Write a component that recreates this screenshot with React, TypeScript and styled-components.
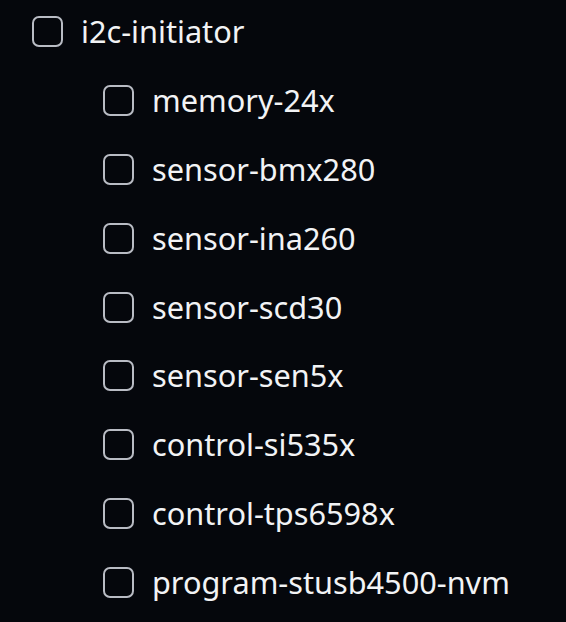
import React from 'react';
import styled, { createGlobalStyle } from 'styled-components';

const GlobalStyle = createGlobalStyle`
  html, body {
    margin: 0;
    padding: 0;
    background: #05070c;
  }
  body {
    font-family: "Noto Sans", "Open Sans", sans-serif;
    color: #f2f3f5;
  }
`;

const Tree = styled.ul`
  list-style: none;
  margin: 0;
  padding: 16px 0 0 32px;
  display: flex;
  flex-direction: column;
`;

const Children = styled.ul`
  list-style: none;
  margin: 0;
  padding: 0 0 0 71px;
  display: flex;
  flex-direction: column;
`;

const Row = styled.label`
  display: flex;
  align-items: center;
  gap: 18px;
  height: 31px;
  margin-bottom: 37.9px;
  cursor: pointer;
`;

const Box = styled.span`
  box-sizing: border-box;
  flex: none;
  width: 31px;
  height: 31px;
  border: 2px solid #b9bcc4;
  border-radius: 7px;
`;

const Label = styled.span`
  font-size: 30.7px;
  line-height: 31px;
  white-space: nowrap;
`;

const children = [
  'memory-24x',
  'sensor-bmx280',
  'sensor-ina260',
  'sensor-scd30',
  'sensor-sen5x',
  'control-si535x',
  'control-tps6598x',
  'program-stusb4500-nvm',
];

const Item: React.FC<{ name: string }> = ({ name }) => (
  <li>
    <Row>
      <Box />
      <Label>{name}</Label>
    </Row>
  </li>
);

const App: React.FC = () => (
  <>
    <GlobalStyle />
    <Tree>
      <li>
        <Row>
          <Box />
          <Label>i2c-initiator</Label>
        </Row>
        <Children>
          {children.map((c) => (
            <Item key={c} name={c} />
          ))}
        </Children>
      </li>
    </Tree>
  </>
);

export default App;
